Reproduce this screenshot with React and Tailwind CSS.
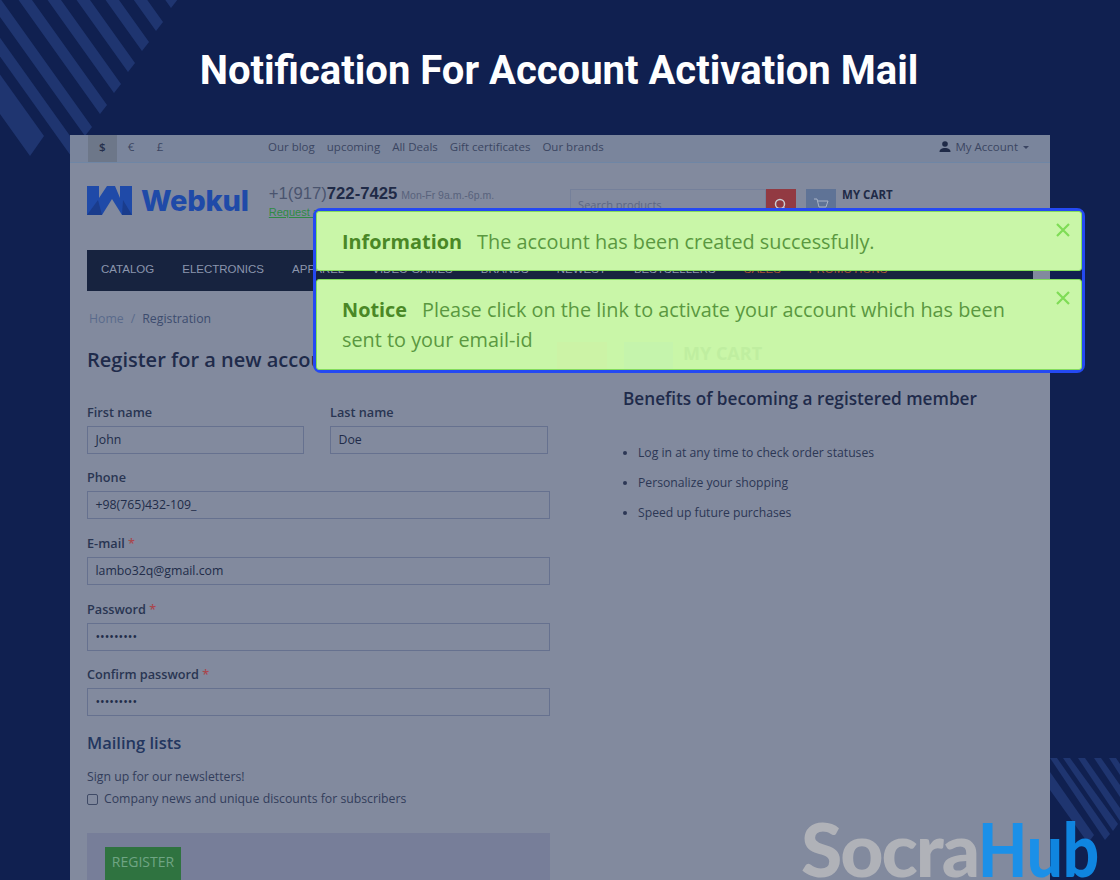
import React from "react";

const open = "font-['Open_Sans',sans-serif]";
const arial = "font-['Liberation_Sans',Arial,sans-serif]";

function barPoints(rx, ry, wx, wy) {
  const len = 260;
  return [
    [rx, ry],
    [rx + wx, ry + wy],
    [rx + wx - len, ry + wy - len * 1.4],
    [rx - len, ry - len * 1.4],
  ].map((p) => p.join(",")).join(" ");
}

function StripesTopLeft() {
  const corners = [[178, -1], [163, 22], [149, 42], [135, 63], [121, 84], [107, 105], [92, 127], [78, 147]];
  return (
    <svg className="absolute left-0 top-0" width="200" height="180" viewBox="0 0 200 180">
      {corners.map(([x, y]) => (
        <polygon key={x} points={barPoints(x, y, -7, 9)} fill="#1f3570" />
      ))}
      <polygon points={barPoints(44, 136, -14, 20)} fill="#1f3570" />
    </svg>
  );
}

function StripesBottomRight() {
  return (
    <svg className="absolute left-[1050px] top-[758px]" width="70" height="90" viewBox="1050 758 70 90">
      <polygon points="1050,772 1094,835 1088,843 1050,790" fill="#1f3570" />
      <polygon points="1050,758 1057,758 1110,834 1105,840 1050,758" fill="#1f3570" />
      <polygon points="1063,758 1070,758 1118,824 1113,831" fill="#1f3570" />
      <polygon points="1078,758 1085,758 1120,808 1120,821" fill="#1f3570" />
      <polygon points="1094,758 1101,758 1120,785 1120,797" fill="#1f3570" />
      <polygon points="1109,758 1116,758 1120,764 1120,775" fill="#1f3570" />
    </svg>
  );
}

function WebkulMark() {
  return (
    <svg width="45" height="30" viewBox="0 0 45 30" className="shrink-0">
      <path d="M0 0H12V12L20 0H28L33 12V0H45V29H35L25 13 15 29H0Z" fill="#1f4aa8" />
      <path d="M0 29L11 14 15 29Z" fill="#1a3c8c" />
      <path d="M45 29L36 14 35 29Z" fill="#1a3c8c" />
    </svg>
  );
}

function Field({ label, req, value, widthClass = "w-[463px]", mt = "mt-[15.5px]" }) {
  return (
    <div className={mt}>
      <div className="h-[17px] text-[12.7px] leading-[17px] font-semibold text-[#293552]">
        {label}
        {req && <span className="text-[#a8484f]"> *</span>}
      </div>
      <div className={`mt-[5px] h-[28px] ${widthClass} border border-[#66718f] px-[7.5px] text-[12.3px] leading-[26px] text-[#212c49]`}>
        {value}
      </div>
    </div>
  );
}

function Alert({ title, children, heightClass, ghost }) {
  return (
    <div className={`relative ${heightClass} rounded-[3px] border border-[#83dc5c] bg-[#c9f6a8] pl-[25px] pr-[60px] text-[19.85px] leading-[30px] text-[#5a9840] ${open}`}>
      {ghost}
      <div className="relative pt-[15px]">
        <span className="mr-[15px] font-bold text-[#4a8826]">{title}</span>
        {children}
      </div>
      <svg className="absolute right-[11px] top-[10.5px]" width="14" height="14" viewBox="0 0 14 14">
        <path d="M1 1L13 13M13 1L1 13" stroke="#7fdc56" strokeWidth="2.2" fill="none" />
      </svg>
    </div>
  );
}

export default function App() {
  const navItems = ["CATALOG", "ELECTRONICS", "APPAREL", "VIDEO GAMES", "BRANDS", "NEWEST", "BESTSELLERS"];
  return (
    <div className="relative h-[880px] w-[1120px] overflow-hidden bg-[#102050]">
      <StripesTopLeft />
      <StripesBottomRight />

      <div className="relative flex h-[135px] justify-center pr-[2px] pt-[44px]">
        <h1 className="h-[54px] text-[40px] font-bold leading-[54px] text-white font-['Roboto',sans-serif]">
          Notification For Account Activation Mail
        </h1>
      </div>

      <div className={`relative ml-[70px] h-[745px] w-[980px] overflow-hidden bg-[#828a9e] ${open}`}>
        {/* top bar */}
        <div className="flex h-[28px] items-center border-b border-[#6f86a5] bg-[#7a859c] pb-[3px] pl-[18px] pr-[21px] text-[11.5px] text-[#3a4562]">
          <div className="-mb-[3px] flex h-[27px]">
            <span className="flex w-[28.5px] items-center justify-center bg-[#6d7789] pb-[3px] font-semibold text-[#252f4b]">$</span>
            <span className="flex w-[29px] items-center justify-center pb-[3px]">€</span>
            <span className="flex w-[29px] items-center justify-center pb-[3px]">£</span>
          </div>
          <div className="ml-[93.5px] flex gap-[12px]">
            <span>Our blog</span>
            <span>upcoming</span>
            <span>All Deals</span>
            <span>Gift certificates</span>
            <span>Our brands</span>
          </div>
          <div className="ml-auto flex items-center">
            <svg width="12" height="12" viewBox="0 0 12 12" className="mr-[4px]">
              <circle cx="6" cy="3" r="2.8" fill="#1f2a47" />
              <path d="M0.5 11C0.5 8 3 7 6 7s5.500 1 5.500 4Z" fill="#1f2a47" />
            </svg>
            <span>My Account</span>
            <span className="ml-[5px] h-0 w-0 border-x-[3px] border-t-[3px] border-x-transparent border-t-[#3a4562]" />
          </div>
        </div>

        {/* header */}
        <div className="flex h-[87px] pl-[17px]">
          <div className="mt-[22px] flex h-[32px] items-center">
            <WebkulMark />
            <span className="ml-[9px] text-[29px] font-extrabold leading-[32px] tracking-[-0.2px] text-[#1f4aa8] font-['Inter',sans-serif]">Webkul</span>
          </div>
          <div className={`ml-[20px] mt-[21px] ${arial}`}>
            <div className="h-[20px] whitespace-nowrap text-[16.7px] leading-[20px] text-[#4a546e]">
              +1(917)<b className="font-bold text-[#1f2a47]">722-7425</b>
              <span className="ml-[4px] text-[10.5px] text-[#58627c]">Mon-Fr 9a.m.-6p.m.</span>
            </div>
            <div className="mt-[1px] text-[11px] leading-[14px] text-[#2f8a45] underline">Request a call</div>
          </div>
          <div className="ml-[76px] mt-[26px] flex h-[31px] w-[226px] shrink-0">
            <div className="flex-1 border border-[#75809a] px-[7px] text-[11px] leading-[29px] text-[#5c6784]">Search products</div>
            <div className="flex w-[30px] items-center justify-center bg-[#923a42]">
              <svg width="14" height="14" viewBox="0 0 14 14" fill="none" stroke="#c9ccd4" strokeWidth="1.5"><circle cx="6" cy="6" r="4.5" /><path d="M9.5 9.5L13 13" /></svg>
            </div>
          </div>
          <div className="ml-[10px] mt-[26px] flex h-[31px] w-[30px] shrink-0 items-center justify-center bg-[#5f7396]">
            <svg width="16" height="14" viewBox="0 0 16 14" fill="none" stroke="#a9b3c5" strokeWidth="1"><path d="M1 1H4L6 9H13L15 3H5" /><circle cx="7" cy="12" r="1" /><circle cx="12" cy="12" r="1" /></svg>
          </div>
          <div className="ml-[6px] mt-[24px] text-[11.5px] font-bold leading-[15px] text-[#1f2a47]">MY CART</div>
        </div>

        {/* nav */}
        <div className="mx-[17px] flex h-[41px] items-center gap-[28px] bg-[#17233f] pb-[2px] pl-[14px] text-[11.5px] text-[#8b95ad]">
          {navItems.map((item) => (
            <span key={item} className={arial}>{item}</span>
          ))}
          <span className={`${arial} text-[#a8522f]`}>SALES</span>
          <span className={`${arial} text-[#a8522f]`}>PROMOTIONS</span>
        </div>

        <div className="flex pl-[17px]">
          {/* form column */}
          <div className="w-[536px] shrink-0">
            <div className="mt-[19px] flex h-[17px] gap-[7px] pl-[2px] text-[12.3px] leading-[17px]">
              <span className="text-[#5a6a8c]">Home</span>
              <span className="text-[#5a6a8c]">/</span>
              <span className="text-[#3d4c6e]">Registration</span>
            </div>
            <h2 className="mt-[19px] h-[27px] text-[20px] font-semibold leading-[27px] text-[#1f2b4b]">Register for a new account</h2>
            <div className="mt-[31px] flex gap-[26px]">
              <Field label="First name" value="John" widthClass="w-[217px]" mt="mt-0" />
              <Field label="Last name" value="Doe" widthClass="w-[218px]" mt="mt-0" />
            </div>
            <Field label="Phone" value="+98(765)432-109_" mt="mt-[15px]" />
            <Field label="E-mail" req value="lambo32q@gmail.com" />
            <Field label="Password" req value="•••••••••" mt="mt-[16.5px]" />
            <Field label="Confirm password" req value="•••••••••" mt="mt-[15px]" />
            <h3 className="mt-[15px] h-[24px] text-[16.5px] font-semibold leading-[24px] text-[#23365f]">Mailing lists</h3>
            <div className="mt-[13px] h-[17px] text-[12.25px] leading-[17px] text-[#323d5b]">Sign up for our newsletters!</div>
            <div className="mt-[6px] flex h-[17px] items-center text-[12.25px] text-[#323d5b]">
              <span className="mr-[6px] h-[11px] w-[11px] rounded-[2px] border border-[#3f4a66]" />
              Company news and unique discounts for subscribers
            </div>
            <div className="mt-[25px] h-[60px] w-[463px] bg-[#777e99] pl-[18px] pt-[14px]">
              <div className="h-[40px] w-[76px] bg-[#2f7340] text-center text-[14px] leading-[30px] text-[#6fa584]">REGISTER</div>
            </div>
          </div>
          {/* benefits */}
          <div className="flex-1">
            <h3 className="mt-[96px] h-[24px] text-[17.2px] font-semibold leading-[24px] text-[#1f2b4b]">Benefits of becoming a registered member</h3>
            <ul className="mt-[33px] flex list-disc flex-col gap-[13px] pl-[15px] text-[12.2px] leading-[17px] text-[#2c3755]">
              <li>Log in at any time to check order statuses</li>
              <li>Personalize your shopping</li>
              <li>Speed up future purchases</li>
            </ul>
          </div>
        </div>
      </div>

      {/* notification overlay */}
      <div className="absolute left-[313px] top-[208px] flex h-[165px] w-[772px] flex-col gap-[8px] rounded-[8px] border-[3px] border-[#2449f2]">
        <Alert title="Information" heightClass="h-[60px]">The account has been created successfully.</Alert>
        <Alert
          title="Notice"
          heightClass="h-[91px]"
          ghost={
            <div className="absolute left-[240px] top-[62px] flex h-[27px] items-start gap-[17px]">
              <div className="h-[27px] w-[50px] bg-[#ccf3a6]" />
              <div className="h-[27px] w-[49px] bg-[#c5f4ac]" />
              <div className="-ml-[7px] text-[18px] font-bold leading-[22px] text-[#bfeea0]">MY CART</div>
            </div>
          }
        >
          Please click on the link to activate your account which has been sent to your email-id
        </Alert>
      </div>

      {/* watermark */}
      <div className="absolute left-[801px] top-[804px] whitespace-nowrap text-[75px] font-black leading-[88px] font-['Lato',sans-serif]">
        <span className="tracking-[-2px] text-[#b0b2b8]">Socra</span>
        <span className="inline-block origin-left scale-x-[0.85] text-[#1090f0]/90">Hub</span>
      </div>
    </div>
  );
}
